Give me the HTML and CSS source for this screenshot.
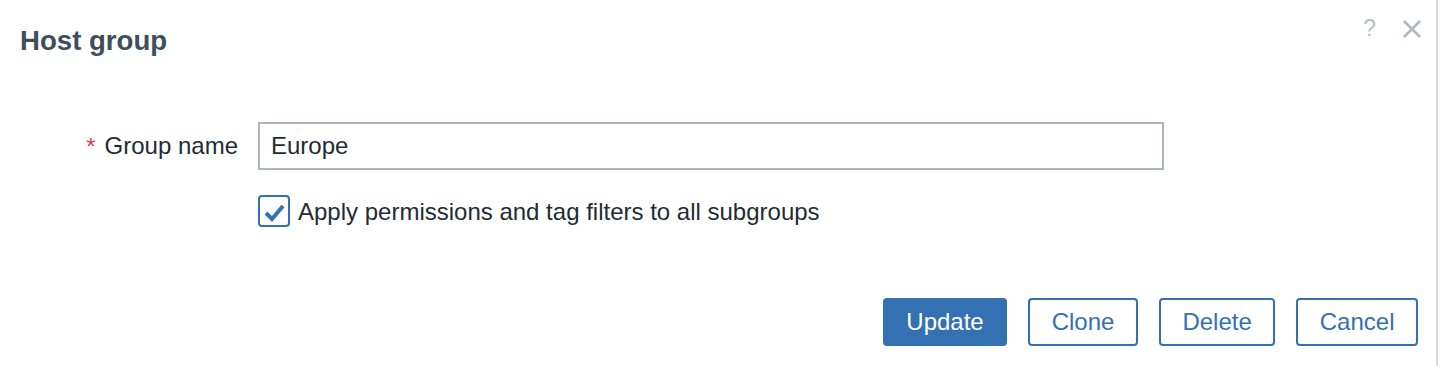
FILE: index.html
```html
<!DOCTYPE html>
<html>
<head>
<meta charset="utf-8">
<link rel="stylesheet" href="styles.css">
</head>
<body>
<div class="dialog">
  <div class="header">
    <h2 class="title">Host group</h2>
    <div class="header-tools">
      <span class="help">?</span>
      <svg class="close" width="20" height="20" viewBox="0 0 20 20"><path d="M2 2L18 18M18 2L2 18" stroke="#adb8bf" stroke-width="2.6" fill="none"/></svg>
    </div>
  </div>
  <div class="form">
    <label class="label"><span class="req">*</span>Group name</label>
    <div class="input">Europe</div>
    <div></div>
    <div class="check-row">
      <span class="checkbox">
        <svg width="28" height="28" viewBox="0 0 28 28"><path d="M6 16L12 22L23 9" stroke="#3371b3" stroke-width="4" fill="none" stroke-linejoin="miter" stroke-linecap="butt"/></svg>
      </span>
      <span class="check-label">Apply permissions and tag filters to all subgroups</span>
    </div>
  </div>
  <div class="footer">
    <button class="btn primary">Update</button>
    <button class="btn">Clone</button>
    <button class="btn">Delete</button>
    <button class="btn">Cancel</button>
  </div>
</div>
</body>
</html>
```
FILE: styles.css
```css
html, body {
  margin: 0;
  padding: 0;
  background: #ffffff;
}
body {
  font-family: "Liberation Sans", Arial, sans-serif;
  color: #1f2c33;
}
.dialog {
  width: 1438px;
  height: 366px;
  box-sizing: border-box;
  border-right: 2px solid #d5dadf;
}
.header {
  display: flex;
  justify-content: space-between;
  align-items: flex-start;
  padding: 24px 14px 0 20px;
}
.title {
  margin: 0;
  font-size: 27.6px;
  line-height: 34px;
  font-weight: bold;
  color: #3d4f5d;
}
.header-tools {
  display: flex;
  align-items: center;
  gap: 26px;
  margin-top: -9px;
}
.help {
  font-size: 23px;
  line-height: 26px;
  color: #b7c0c7;
}
.close {
  display: block;
  margin-top: 1px;
}
.form {
  display: grid;
  grid-template-columns: 238px 906px;
  column-gap: 20px;
  row-gap: 25px;
  margin-top: 64px;
  font-size: 24px;
}
.label {
  display: flex;
  align-items: center;
  justify-content: flex-end;
  height: 48px;
}
.req {
  color: #d64541;
  margin-right: 9px;
  position: relative;
  top: 1px;
}
.input {
  height: 48px;
  box-sizing: border-box;
  border: 2px solid #acb6bd;
  padding: 0 11px;
  display: flex;
  align-items: center;
  color: #1f2c33;
}
.check-row {
  display: flex;
  align-items: center;
  gap: 8px;
  height: 32px;
}
.checkbox {
  width: 32px;
  height: 32px;
  box-sizing: border-box;
  border: 2px solid #3371b3;
  border-radius: 4px;
  display: flex;
  align-items: center;
  justify-content: center;
}
.checkbox svg {
  display: block;
}
.check-label {
  position: relative;
  top: 1px;
}
.footer {
  display: flex;
  justify-content: flex-end;
  gap: 21px;
  margin-top: 71px;
  padding-right: 18px;
}
.btn {
  height: 48px;
  box-sizing: border-box;
  border: 2px solid #3371b3;
  border-radius: 4px;
  background: #ffffff;
  color: #3371b3;
  font-family: "Liberation Sans", Arial, sans-serif;
  font-size: 24px;
  padding: 0 21.5px;
}
.btn.primary {
  background: #3371b3;
  color: #ffffff;
}
```
